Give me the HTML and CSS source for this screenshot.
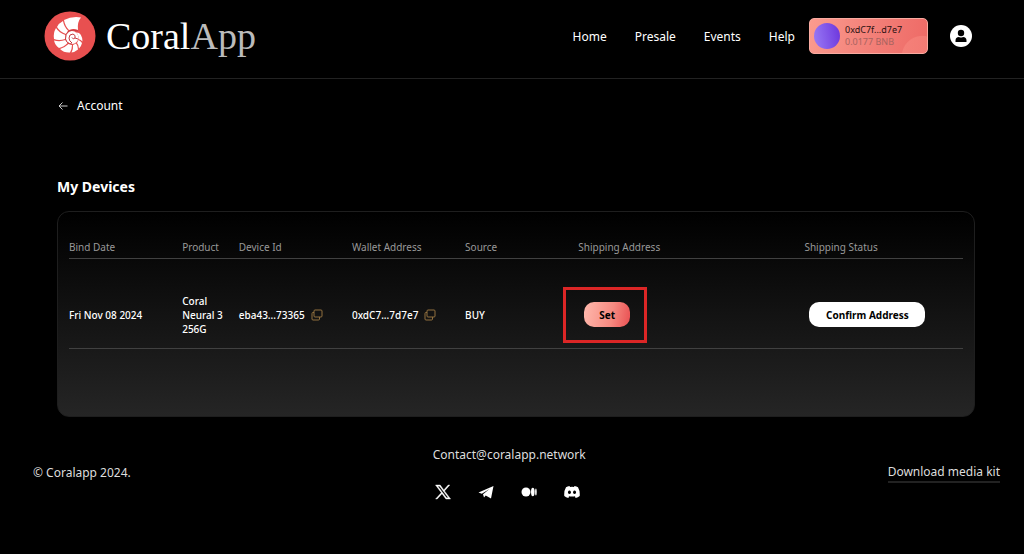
FILE: index.html
```html
<!DOCTYPE html>
<html lang="en">
<head>
    <meta charset="UTF-8">
    <title>CoralApp - My Devices</title>
    <meta name="viewport" content="width=device-width, initial-scale=1.0">
    <link rel="stylesheet" href="styles.css">
</head>
<body>
    <header class="header">
        <a class="logo" href="#">
            <svg class="logo-icon" viewBox="0 0 52 50" aria-hidden="true">
                <ellipse cx="26" cy="25" rx="25.500" ry="24.500" fill="#e85050"/>
                <!-- shell chambers -->
                <g fill="#fff">
                    <path d="M20 9Q28 5 37 6.500Q33 11 34 19Q30 17 25 19Q21 15 20 9z"/>
                    <path d="M19 10Q20 16 24 19.500L22 23Q16 21 13 16Q15 12 19 10z"/>
                    <path d="M12 17Q15 22 21.500 24L21 28Q15 30 10 28Q9 22 12 17z"/>
                    <path d="M10 29.500Q16 31 21.500 29L23.500 32Q20 36 15 37Q11 34 10 29.500z"/>
                    <path d="M16 38Q21 36.500 24.500 33L28 34Q28 38 26 41.500Q20 42 16 38z"/>
                    <path d="M27.500 41.500Q29.500 38 29 34L32 32.500Q34 35 34 38.500Q31 41 27.500 41.500z"/>
                    <path d="M35 37.500Q35 34 33 32L34.500 29Q36.500 30 38 32Q37.500 35 35 37.500z"/>
                    <path d="M38.500 30.500Q37 28.500 34.500 28Q35 24 32 21.500Q38 21 38.500 30.500z"/>
                    <circle cx="28" cy="26.500" r="6.500"/>
                </g>
                <path d="M34 20Q29 18 25 20Q21 23 21.500 28Q23 33 28 33M28 32Q25 30 25 27Q25 23 29 23Q32 24 31 27Q29 29 28 26.500M31 27L34 28" fill="none" stroke="#c63a40"/>
            </svg>
            <span class="logo-text"><span class="logo-coral">Coral</span>App</span>
        </a>
        <nav class="nav">
            <a href="#">Home</a>
            <a href="#">Presale</a>
            <a href="#">Events</a>
            <a href="#">Help</a>
        </nav>
        <button class="wallet" type="button">
            <span class="wallet-avatar"></span>
            <span class="wallet-info">
                <span>0xdC7f...d7e7</span>
                <span class="wallet-balance">0.0177 BNB</span>
            </span>
        </button>
        <button class="profile" type="button" aria-label="Profile">
            <svg viewBox="0 0 22 22">
                <circle cx="11" cy="11" r="11" fill="#fff"/>
                <circle cx="11" cy="8" r="3.200" fill="#000"/>
                <path d="M5.500 17v-1.500q0-3.500 3.500-3.500q2 1 4 0q3.500 0 3.500 3.500V17z" fill="#000"/>
            </svg>
        </button>
    </header>

    <main class="main">
        <a class="back" href="#">
            <svg class="back-icon" viewBox="0 0 10 10" aria-hidden="true">
                <path d="M9.500 5H1M4.500 1.500L1 5l3.500 3.500" fill="none" stroke="#ccc"/>
            </svg>
            Account
        </a>
        <h1 class="title">My Devices</h1>

        <section class="panel">
            <table class="devices">
                <colgroup>
                    <col class="col-normal">
                    <col class="col-product">
                    <col class="col-normal">
                    <col class="col-normal">
                    <col class="col-normal">
                    <col class="col-shipping">
                    <col>
                </colgroup>
                <thead>
                    <tr>
                        <th>Bind Date</th>
                        <th>Product</th>
                        <th>Device Id</th>
                        <th>Wallet Address</th>
                        <th>Source</th>
                        <th>Shipping Address</th>
                        <th>Shipping Status</th>
                    </tr>
                </thead>
                <tbody>
                    <tr>
                        <td>Fri Nov 08 2024</td>
                        <td>Coral Neural 3 256G</td>
                        <td>
                            <div class="copy-cell">
                                eba43...73365
                                <button class="copy" type="button" aria-label="Copy device id">
                                    <svg viewBox="0 0 12 12"><path d="M4 1h6q1 0 1 1v5q0 1-1 1H4q-1 0-1-1V2q0-1 1-1zM3 3.500H2q-1 0-1 1V10q0 1 1 1h5.500q1 0 1-1V8" fill="none" stroke="#92713f"/></svg>
                                </button>
                            </div>
                        </td>
                        <td>
                            <div class="copy-cell">
                                0xdC7...7d7e7
                                <button class="copy" type="button" aria-label="Copy wallet address">
                                    <svg viewBox="0 0 12 12"><path d="M4 1h6q1 0 1 1v5q0 1-1 1H4q-1 0-1-1V2q0-1 1-1zM3 3.500H2q-1 0-1 1V10q0 1 1 1h5.500q1 0 1-1V8" fill="none" stroke="#92713f"/></svg>
                                </button>
                            </div>
                        </td>
                        <td>BUY</td>
                        <td>
                            <div class="highlight">
                                <button class="btn btn-set" type="button">Set</button>
                            </div>
                        </td>
                        <td><button class="btn btn-confirm" type="button">Confirm Address</button></td>
                    </tr>
                </tbody>
            </table>
        </section>
    </main>

    <footer class="footer">
        <span class="copyright">© Coralapp 2024.</span>
        <div class="contact">
            <a href="#">Contact@coralapp.network</a>
            <div class="social">
                <a href="#" aria-label="X">
                    <svg viewBox="0 0 16 16" fill="#fff"><path fill-rule="evenodd" d="M.5 1h4.700l3.600 4.900L13.200 1h1.600L9.500 6.900 15.600 15h-4.700L7 9.700 2.200 15H.6l5.700-6.300zM2.800 2.200l8.700 11.600h1.800L4.600 2.200z" stroke="#fff" stroke-width="0.400"/></svg>
                </a>
                <a href="#" aria-label="Telegram">
                    <svg viewBox="0 0 16 16" fill="#fff"><path d="M.5 8.500L15.500 2 13 14.500 7.700 11.500 6 13.500 5 10.300 11.500 5 3.800 9.700z"/></svg>
                </a>
                <a href="#" aria-label="Medium">
                    <svg viewBox="0 0 16 16" fill="#fff"><circle cx="5" cy="8" r="4.500"/><ellipse cx="11.800" cy="8" rx="1.800" ry="4.200"/><ellipse cx="14.900" cy="8" rx="0.800" ry="3.600"/></svg>
                </a>
                <a href="#" aria-label="Discord">
                    <svg viewBox="0 0 16 16" fill="#fff"><path fill-rule="evenodd" d="M5.500 2L6 3q2-.4 4 0l.5-1q2 .3 3.500 1.200Q16.200 7 15.700 12q-1.700 1.500-4 2l-.9-1.500.9-.5q-3.700 1.200-7.400 0l.9.500-.9 1.500q-2.300-.5-4-2Q-.2 7 2 3.200 3.500 2.300 5.500 2zM5.400 6.600a1.500 1.700 0 1 0 .1 0zM10.500 6.600a1.500 1.700 0 1 0 .1 0z"/></svg>
                </a>
            </div>
        </div>
        <a class="media-kit" href="#">Download media kit</a>
    </footer>
</body>
</html>
```

FILE: styles.css
```css
* {
    box-sizing: border-box;
}
body {
    margin: 0;
    background: #000;
    color: #fff;
    font-family: "Noto Sans", "Open Sans", sans-serif;
    font-size: 12px;
}
a {
    color: inherit;
    text-decoration: none;
}
button {
    padding: 0;
    border: none;
    background: none;
    font-family: inherit;
    cursor: pointer;
}
svg {
    display: block;
    width: 100%;
    height: 100%;
}

/* Header */
.header {
    display: flex;
    align-items: center;
    padding: 0 52px 6px 44px;
    height: 79px;
    border-bottom: 1px solid #222;
}
.logo {
    display: flex;
    align-items: center;
    gap: 10px;
}
.logo-icon {
    width: 52px;
    height: 50px;
}
.logo-text {
    font-family: "Liberation Serif", serif;
    font-size: 38px;
    line-height: 50px;
    color: #bbb;
}
.logo-coral {
    color: #fff;
}
.nav {
    display: flex;
    gap: 28px;
    margin-left: auto;
}
.wallet {
    display: flex;
    align-items: center;
    gap: 5px;
    width: 119px;
    height: 36px;
    margin-left: 14px;
    padding: 0 4px;
    border: 1px solid #f9aaa0;
    border-radius: 5px;
    background: radial-gradient(circle at 96% 110%, #ff9b8f55 20px, transparent 21px), linear-gradient(100deg, #fb9b8e, #f27c75 60%, #ee6a66);
    color: #2b1111;
    text-align: left;
}
.wallet-avatar {
    width: 26px;
    height: 26px;
    border-radius: 50%;
    background: linear-gradient(80deg, #9a7cf6, #6c35dc);
}
.wallet-info {
    display: flex;
    flex-direction: column;
    font-size: 9px;
    line-height: 12px;
}
.wallet-balance {
    color: #a8635f;
}
.profile {
    width: 22px;
    height: 22px;
    margin-left: 22px;
}

/* Content */
.main {
    padding: 18px 49px 0 57px;
}
.back {
    display: flex;
    align-items: center;
    gap: 9px;
    line-height: 18px;
}
.back-icon {
    width: 10px;
    height: 10px;
    margin-left: 1px;
}
.title {
    margin: 62px 0 14px;
    font-size: 14px;
    line-height: 20px;
}
.panel {
    padding: 28px 11px 67px;
    border: 1px solid #1e1e1e;
    border-radius: 12px;
    background: linear-gradient(#000, #252525);
}
.devices {
    width: 100%;
    table-layout: fixed;
    border-collapse: collapse;
    font-size: 10px;
    line-height: 14px;
}
.col-normal {
    width: 12.66%;
}
.col-product {
    width: 6.33%;
}
.col-shipping {
    width: 25.3%;
}
.devices th,
.devices td {
    padding: 0;
    border-bottom: 1px solid #414141;
    text-align: left;
}
.devices th {
    padding-bottom: 4px;
    color: #999;
    font-weight: normal;
}
.devices td {
    height: 90px;
    padding-top: 22px;
    font-weight: 500;
}
.copy-cell {
    display: flex;
    align-items: center;
    gap: 6px;
}
.copy {
    width: 12px;
    height: 12px;
}
.btn {
    height: 25px;
    border-radius: 10px;
    font-size: 10px;
    font-weight: bold;
}
.btn-set {
    width: 46px;
    background: linear-gradient(100deg, #ffb9ad, #f68a81 60%, #e94f51);
}
.btn-confirm {
    width: 116px;
    margin-left: 5px;
    background: #fff;
}
/* Red frame around the Set button */
.highlight {
    display: flex;
    align-items: center;
    width: 84px;
    height: 56px;
    margin: -16px 0 -16px -15px;
    padding-left: 18px;
    border: 3px solid #dc2626;
}

/* Footer */
.footer {
    display: flex;
    align-items: center;
    justify-content: space-between;
    padding: 29px 24px 0 33px;
    color: #ddd;
    line-height: 18px;
}
.contact {
    display: flex;
    flex-direction: column;
    gap: 20px;
}
.social {
    display: flex;
    gap: 27px;
    padding-left: 2px;
}
.social a {
    width: 16px;
    height: 16px;
}
.media-kit {
    border-bottom: 2px solid #222;
}
```
